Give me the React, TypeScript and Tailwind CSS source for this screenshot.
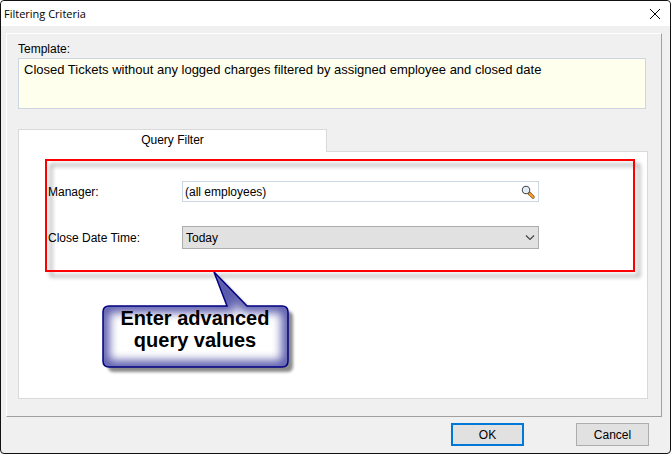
import React from "react";

function Magnifier() {
  return (
    <svg width="14" height="14" viewBox="0 0 14 14" fill="none" aria-hidden="true">
      <path d="M8 8 12 12" stroke="#6b4a1c" strokeWidth="3.2" strokeLinecap="round" />
      <path d="M8.6 8.6 11.9 11.9" stroke="#f79a2c" strokeWidth="2.2" strokeLinecap="round" />
      <circle cx="5" cy="5" r="3.7" fill="#dceaf8" stroke="#5a5c60" strokeWidth="1.2" />
      <circle cx="5" cy="5" r="2.6" stroke="#f4f8fc" strokeWidth="0.8" />
    </svg>
  );
}

const BUBBLE =
  "M112 0 125 34H7Q1 34 1 40V89Q1 95 7 95H180Q186 95 186 89V40Q186 34 180 34H145Z";

function Callout() {
  return (
    <div className="pointer-events-none absolute top-full left-[57px] h-[104px] w-[195px]">
      <svg className="absolute inset-0" width="195" height="106" viewBox="0 0 195 106" aria-hidden="true">
        <defs>
          <clipPath id="bubble-clip">
            <path d={BUBBLE} />
          </clipPath>
          <filter id="soft" x="-20%" y="-20%" width="140%" height="140%" colorInterpolationFilters="sRGB">
            <feGaussianBlur stdDeviation="5" />
          </filter>
          <filter id="shade" x="-20%" y="-20%" width="140%" height="140%">
            <feGaussianBlur stdDeviation="1.5" />
          </filter>
        </defs>
        <path d={BUBBLE} transform="translate(5 5)" fill="#000000" opacity="0.45" filter="url(#shade)" />
        <g clipPath="url(#bubble-clip)">
          <rect width="195" height="106" fill="#ffffff" />
          <path
            d={BUBBLE}
            fill="none"
            stroke="#000080"
            strokeWidth="13"
            opacity="0.65"
            filter="url(#soft)"
          />
        </g>
        <path d={BUBBLE} fill="none" stroke="#000080" strokeWidth="1.5" />
      </svg>
      <p className="relative w-[186px] pt-[35px] text-center text-[20px] leading-[22px] font-bold">
        Enter advanced
        <br />
        query values
      </p>
    </div>
  );
}

export default function App() {
  return (
    <div className="flex min-h-screen flex-col rounded-[4px] border border-[#111111] bg-[#f0f0f0] font-['Liberation_Sans',Arial,sans-serif] text-[12px] leading-4 text-black">
      <header className="flex h-[25px] items-center justify-between rounded-t-[4px] bg-white pr-[9px] pl-[3px]">
        <h1 className="font-['Open_Sans','Noto_Sans',sans-serif] text-[11px] leading-4">Filtering Criteria</h1>
        <button type="button" aria-label="Close">
          <svg width="12" height="12" viewBox="0 0 12 12" stroke="#000000" strokeWidth="1" aria-hidden="true">
            <path d="M1 1 11 11M11 1 1 11" />
          </svg>
        </button>
      </header>

      <main className="mt-[7px] mr-2 ml-[5px] flex flex-1 flex-col border border-t-white border-r-[#a0a0a0] border-b-[#a0a0a0] border-l-white pt-[7px] pr-[13px] pb-[17px] pl-[11px]">
        <label htmlFor="template">Template:</label>
        <textarea
          id="template"
          readOnly
          className="mt-px mr-0.5 block h-[51px] resize-none border border-[#cbd6e2] bg-[#ffffee] px-[5px] py-[3px] text-[13px] leading-4 outline-none"
          defaultValue="Closed Tickets without any logged charges filtered by assigned employee and closed date"
        />

        <div role="tablist" className="relative z-10 mt-5 -mb-px flex">
          <button
            type="button"
            role="tab"
            aria-selected="true"
            className="h-[23px] w-[309px] border border-b-0 border-[#d9d9d9] bg-white pb-0.5"
          >
            Query Filter
          </button>
        </div>

        <section className="flex-1 border border-[#d9d9d9] bg-white pt-[7px] pr-3 pl-[26px]">
          <div className="relative h-[113px] pt-[22px] pl-[3px]">
            <div className="grid grid-cols-[134px_1fr_96px] items-center gap-y-6">
              <label htmlFor="manager">Manager:</label>
              <div className="flex h-[21px] items-center border border-[#cbd6e2] bg-white pr-[3px]">
                <input
                  id="manager"
                  type="text"
                  defaultValue="(all employees)"
                  className="min-w-0 flex-1 pl-0.5 outline-none"
                />
                <button type="button" aria-label="Find employee">
                  <Magnifier />
                </button>
              </div>
              <span />
              <label htmlFor="closed">Close Date Time:</label>
              <div className="relative">
                <select
                  id="closed"
                  className="block h-[23px] w-full appearance-none border border-[#adadad] bg-[#e1e1e1] pl-[3px] outline-none"
                >
                  <option>Today</option>
                </select>
                <svg
                  className="pointer-events-none absolute top-2 right-1"
                  width="10"
                  height="7"
                  viewBox="0 0 10 7"
                  fill="none"
                  stroke="#444444"
                  strokeWidth="1.2"
                  aria-hidden="true"
                >
                  <path d="M1 1.5 5 5.5 9 1.5" />
                </svg>
              </div>
            </div>
            <div className="pointer-events-none absolute inset-0 border-2 border-[#ff0000] drop-shadow-[5px_5px_2px_rgba(0,0,0,0.4)]" />
            <Callout />
          </div>
        </section>
      </main>

      <footer className="flex justify-end gap-[52px] pt-1.5 pr-[21px] pb-[7px]">
        <button type="button" className="h-[23px] w-[73px] border-2 border-[#0078d7] bg-[#e1e1e1]">
          OK
        </button>
        <button type="button" className="h-[23px] w-[73px] border border-[#adadad] bg-[#e1e1e1]">
          Cancel
        </button>
      </footer>
    </div>
  );
}
